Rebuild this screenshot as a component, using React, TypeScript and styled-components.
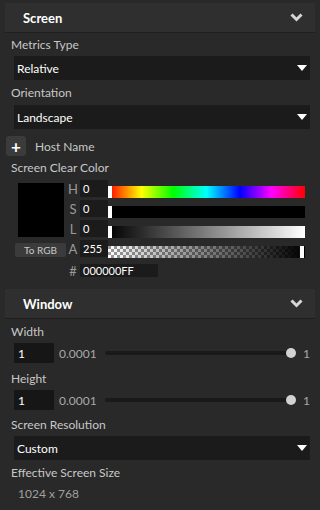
import React from 'react';
import styled, { createGlobalStyle } from 'styled-components';

const GlobalStyle = createGlobalStyle`
  html, body {
    margin: 0;
    padding: 0;
    background: #292929;
  }
  body {
    font-family: Lato, "Open Sans", sans-serif;
    font-size: 12px;
    color: #c8c8c8;
  }
`;

const Panel = styled.div`
  width: 320px;
  height: 510px;
  padding: 3px 5px 0 5px;
  box-sizing: border-box;
  display: flex;
  flex-direction: column;
`;

const SectionHeader = styled.div<{ $top?: number }>`
  height: 30px;
  margin-top: ${(p) => p.$top ?? 0}px;
  background: #2f2f2f;
  border-bottom: 1px solid #1f1f1f;
  box-sizing: border-box;
  display: flex;
  align-items: center;
  justify-content: space-between;
  padding: 0 12px 0 18px;
  font-weight: 700;
  font-size: 13px;
  color: #ffffff;
`;

const Label = styled.div<{ $top?: number }>`
  height: 20px;
  line-height: 20px;
  margin-top: ${(p) => p.$top ?? 0}px;
  padding-left: 6px;
  color: #c8c8c8;
`;

const Dropdown = styled.div<{ $top?: number }>`
  height: 24px;
  margin: ${(p) => p.$top ?? 0}px 5px 0 9px;
  background: #1b1b1b;
  display: flex;
  align-items: center;
  justify-content: space-between;
  padding: 0 3px 0 3px;
  color: #ffffff;
`;

const Triangle = styled.div`
  width: 0;
  height: 0;
  border-left: 5px solid transparent;
  border-right: 5px solid transparent;
  border-top: 6px solid #ffffff;
`;

const HostRow = styled.div`
  display: flex;
  align-items: center;
  gap: 9px;
  margin-top: 7px;
  padding-left: 1px;
`;

const SquareButton = styled.div`
  width: 20px;
  height: 20px;
  border-radius: 3px;
  background: #3b3b3b;
  color: #ffffff;
  font-size: 17px;
  font-weight: 700;
  display: flex;
  align-items: center;
  justify-content: center;
  line-height: 1;
`;

const ColorBlock = styled.div`
  display: grid;
  grid-template-columns: 51px 14px 28px 1fr;
  grid-template-rows: 17px 17px 17px 17px 17px;
  row-gap: 3px;
  margin: 2px 10px 0 10px;
`;

const Swatch = styled.div`
  grid-column: 1;
  grid-row: 1 / span 3;
  margin: 3px 2px 0 3px;
  background: #000000;
`;

const SmallButton = styled.div`
  grid-column: 1;
  grid-row: 4;
  margin-top: 3px;
  height: 14px;
  border-radius: 2px;
  background: #3b3b3b;
  color: #c8c8c8;
  font-size: 10px;
  display: flex;
  align-items: center;
  justify-content: center;
`;

const Channel = styled.div<{ $row: number; $shift?: number }>`
  grid-column: 2;
  grid-row: ${(p) => p.$row};
  margin-top: ${(p) => p.$shift ?? 0}px;
  color: #9a9a9a;
  font-size: 13px;
  display: flex;
  align-items: center;
  justify-content: center;
`;

const NumInput = styled.div<{ $row: number; $span?: boolean; $shift?: number }>`
  grid-column: ${(p) => (p.$span ? '3 / span 2' : '3')};
  grid-row: ${(p) => p.$row};
  margin-top: ${(p) => p.$shift ?? 0}px;
  width: ${(p) => (p.$span ? '75px' : 'auto')};
  background: #1b1b1b;
  color: #ffffff;
  font-size: 11px;
  display: flex;
  align-items: center;
  padding-left: 3px;
`;

const Bar = styled.div<{ $row: number; $bg: string }>`
  grid-column: 4;
  grid-row: ${(p) => p.$row};
  position: relative;
  align-self: end;
  height: 12px;
  margin-bottom: -1px;
  background: ${(p) => p.$bg};
`;

const Handle = styled.div<{ $end?: boolean }>`
  position: absolute;
  top: 0;
  bottom: 0;
  width: 4px;
  background: #ffffff;
  ${(p) => (p.$end ? 'right: 1px; border-left: 1px solid #111;' : 'left: 0;')}
`;

const Field = styled.div<{ $top?: number }>`
  display: flex;
  align-items: center;
  height: 20px;
  margin: ${(p) => p.$top ?? 0}px 0 0 9px;
`;

const ValueBox = styled.div`
  width: 36px;
  height: 20px;
  background: #161616;
  color: #ffffff;
  padding-left: 4px;
  display: flex;
  align-items: center;
`;

const RangeText = styled.span<{ $w?: number }>`
  color: #a8a8a8;
  width: ${(p) => p.$w ?? 0}px;
  padding-left: 5px;
`;

const Track = styled.div`
  flex: 1;
  height: 4px;
  border-radius: 2px;
  background: #1a1a1a;
  position: relative;
  margin-right: 6px;
`;

const Knob = styled.div`
  position: absolute;
  right: -4px;
  top: -3px;
  width: 10px;
  height: 10px;
  border-radius: 50%;
  background: #d2d2d2;
`;

const MaxText = styled.span`
  color: #a8a8a8;
  width: 12px;
  margin-left: 5px;
`;

const Info = styled.div`
  margin-top: 1px;
  padding-left: 13px;
  height: 20px;
  line-height: 20px;
  color: #a0a0a0;
`;

const Chevron = () => (
  <svg width="13" height="9" viewBox="0 0 13 9">
    <polyline points="1.5,1.5 6.5,6.5 11.5,1.5" fill="none" stroke="#d6d6d6" strokeWidth="3" />
  </svg>
);

const hue =
  'linear-gradient(to right, #ff0000 0%, #ffff00 17%, #00ff00 33%, #00ffff 50%, #0000ff 67%, #ff00ff 83%, #ff0000 100%)';
const checker =
  'linear-gradient(to right, rgba(0,0,0,0), #000), repeating-conic-gradient(#ffffff 0 25%, #9a9a9a 0 50%) 0 0 / 6px 6px';

export default function App() {
  return (
    <>
      <GlobalStyle />
      <Panel>
        <SectionHeader>
          <span>Screen</span>
          <Chevron />
        </SectionHeader>
        <Label $top={2}>Metrics Type</Label>
        <Dropdown $top={1}>
          <span>Relative</span>
          <Triangle />
        </Dropdown>
        <Label $top={3}>Orientation</Label>
        <Dropdown $top={2}>
          <span>Landscape</span>
          <Triangle />
        </Dropdown>
        <HostRow>
          <SquareButton>+</SquareButton>
          <span>Host Name</span>
        </HostRow>
        <Label $top={2}>Screen Clear Color</Label>
        <ColorBlock>
          <Swatch />
          <Channel $row={1}>H</Channel>
          <NumInput $row={1}>0</NumInput>
          <Bar $row={1} $bg={hue}>
            <Handle />
          </Bar>
          <Channel $row={2}>S</Channel>
          <NumInput $row={2}>0</NumInput>
          <Bar $row={2} $bg="#000000">
            <Handle />
          </Bar>
          <Channel $row={3}>L</Channel>
          <NumInput $row={3}>0</NumInput>
          <Bar $row={3} $bg="linear-gradient(to right, #000, #fff)">
            <Handle />
          </Bar>
          <SmallButton>To RGB</SmallButton>
          <Channel $row={4}>A</Channel>
          <NumInput $row={4}>255</NumInput>
          <Bar $row={4} $bg={checker}>
            <Handle $end />
          </Bar>
          <Channel $row={5} $shift={4}>#</Channel>
          <NumInput $row={5} $span $shift={4}>000000FF</NumInput>
        </ColorBlock>
        <SectionHeader $top={12}>
          <span>Window</span>
          <Chevron />
        </SectionHeader>
        <Label $top={3}>Width</Label>
        <Field $top={1}>
          <ValueBox>1</ValueBox>
          <RangeText $w={46}>0.0001</RangeText>
          <Track>
            <Knob />
          </Track>
          <MaxText>1</MaxText>
        </Field>
        <Label $top={6}>Height</Label>
        <Field $top={1}>
          <ValueBox>1</ValueBox>
          <RangeText $w={46}>0.0001</RangeText>
          <Track>
            <Knob />
          </Track>
          <MaxText>1</MaxText>
        </Field>
        <Label $top={5}>Screen Resolution</Label>
        <Dropdown $top={1}>
          <span>Custom</span>
          <Triangle />
        </Dropdown>
        <Label $top={3}>Effective Screen Size</Label>
        <Info>1024 x 768</Info>
      </Panel>
    </>
  );
}
